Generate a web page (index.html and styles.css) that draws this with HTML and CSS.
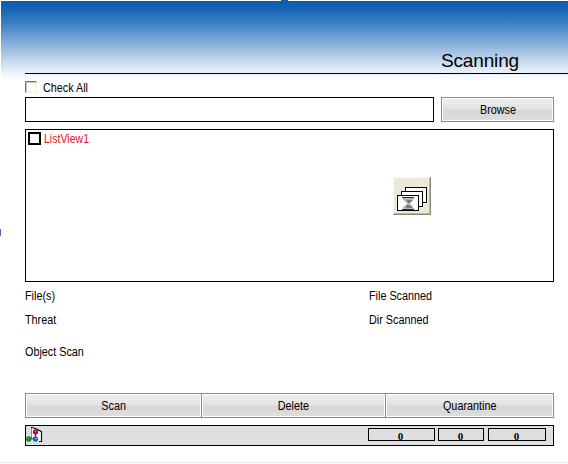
FILE: index.html
```html
<!DOCTYPE html>
<html lang="en">
<head>
<meta charset="utf-8">
<title>Scanning</title>
<link rel="stylesheet" href="styles.css">
</head>
<body>
<main class="form">
  <i class="handle handle-top"></i>
  <i class="handle handle-left"></i>
  <header class="header"><h1>Scanning</h1></header>
  <div class="check-all"><i class="checkbox"></i><span class="text">Check All</span></div>
  <div class="path-row">
    <div class="path"></div>
    <div class="button browse"><span class="text">Browse</span></div>
  </div>
  <section class="list">
    <div class="item"><i class="item-box"></i><span class="text list-name">ListView1</span></div>
    <svg class="component" width="38" height="38" viewBox="0 0 38 38" shape-rendering="crispEdges">
      <path fill="#ece9d8" d="M0 0h38v38H0z"/>
      <path fill="none" stroke="#faf9f3" d="M.5 37V.5H37"/>
      <path fill="none" stroke="#8b897c" d="M0 37.500h37.500V0"/>
      <path fill="none" stroke="#bab7a7" d="M1 36.500h35.500V1"/>
      <g fill="#fff" stroke="#000">
        <path d="M12.500 10.500h21v15h-21z"/>
        <path d="M8.500 14.500h21v15h-21z"/>
        <path d="M4.500 18.500h21v15h-21z"/>
      </g>
      <path fill="#b2b7ba" d="M10 21h11l-1 3-3 2v1l3 2 1 3H10l1-3 3-2v-1l-3-2z"/>
      <path fill="#737c85" d="M14 23h5l-2 3h-2zM14 28h3l2 3h-6z"/>
      <path stroke="#162b70" d="M9 20.500h12"/>
      <path stroke="#173f36" d="M9 32.500h12"/>
    </svg>
  </section>
  <section class="stats">
    <span class="text">File(s)</span><span class="text">File Scanned</span>
    <span class="text">Threat</span><span class="text">Dir Scanned</span>
    <span class="text object">Object Scan</span>
  </section>
  <div class="actions">
    <div class="button"><span class="text">Scan</span></div>
    <div class="button"><span class="text">Delete</span></div>
    <div class="button"><span class="text">Quarantine</span></div>
  </div>
  <footer class="status">
    <svg class="status-icon" width="17" height="17" viewBox="0 0 17 17">
      <path fill="#fff" d="M5 1l5 2 6 3v10l-5-2-6 1z"/>
      <path fill="none" stroke="#88888d" d="M5.500 12V1"/>
      <path fill="none" stroke="#111120" stroke-width="1.200" d="M5 1.200l5 1.500 5.500 3V15.500H13"/>
      <path stroke="#222" d="M3 12.800h7M9.500 7v5"/>
      <circle cx="2.800" cy="13" r="2.700" fill="#168428"/>
      <circle cx="9.500" cy="6" r="2.700" fill="#b20f32"/>
      <circle cx="9.500" cy="13" r="2.700" fill="#1765b0"/>
      <path stroke="#77dc75" d="M2 12.500h1"/>
      <path stroke="#f596a4" d="M9 5.500h1"/>
      <path stroke="#79c9ff" d="M9 12.500h2"/>
    </svg>
    <span class="count files">0</span>
    <span class="count threats">0</span>
    <span class="count folders">0</span>
  </footer>
</main>
</body>
</html>
```
FILE: styles.css
```css
* { box-sizing: border-box; }
body { margin: 0; background: #fff; color: #000; font: 12px/14px "Liberation Sans", Arial, sans-serif; }
.form { position: relative; width: 568px; height: 464px; overflow: hidden; display: flex; flex-direction: column; border-bottom: 1px solid #fffff5; }
.form::after { content: ""; height: 1px; margin-top: 16px; background: #ebebdf; }
.handle { position: absolute; background: #1c5aae; }
.handle-top { left: 281px; top: 0; width: 7px; height: 2px; z-index: 1; }
.handle-left { left: 0; top: 229px; width: 1px; height: 7px; background: #4b65a8; }
.header { height: 80px; flex: none; margin: 1px 0 0 1px; padding-left: 24px; background: linear-gradient(#0b5caf 0, #1465b5 8px, #3a7fc3 22px, #76a5d6 38px, #adc8e5 53px, #dae6f4 66px, #f3f8fe 75px, #fff 80px); }
h1 { height: 73px; margin: 0; border-bottom: 1px solid #000; padding: 49px 0 0 416px; font: 19px/22px "Liberation Sans", Arial, sans-serif; letter-spacing: -.15px; }
.text { display: inline-block; transform: scaleX(.9); transform-origin: left; white-space: nowrap; }
.list-name { transform: scaleX(.88); }
.check-all { height: 16px; margin-left: 25px; display: flex; }
.checkbox { width: 12px; height: 12px; margin-right: 6px; border: 1px solid #eeeede; border-top-color: #77776f; border-left-color: #77776f; box-shadow: inset 1px 1px #c8c8bd; background: #fffffa; }
.path-row { display: flex; height: 25px; margin-left: 25px; gap: 7px; flex: none; }
.path { width: 409px; border: 1px solid #000; }
.button { display: flex; align-items: center; justify-content: center; border: 1px solid #888; box-shadow: inset 0 0 0 1px #fff; background: linear-gradient(#eee, #e3e3e3 45%, #d6d6d6 55%, #dedede); }
.button .text { transform-origin: center; }
.browse { width: 113px; }
.browse .text { margin-left: 1px; }
.list { display: flex; width: 529px; height: 153px; margin: 7px 0 0 25px; border: 1px solid #000; flex: none; }
.item { display: flex; width: 367px; padding: 2px 0 0 2px; color: #df132e; }
.item-box { width: 13px; height: 13px; margin-right: 3px; border: 2px solid #000; }
.component { margin-top: 47px; flex: none; }
.stats { display: grid; grid-template-columns: 344px 1fr; grid-template-rows: 24px 32px 20px; margin: 7px 0 0 25px; height: 104px; flex: none; }
.actions { display: grid; grid-template-columns: 177px 184px 168px; width: 529px; height: 25px; margin-left: 25px; flex: none; }
.actions .button + .button { border-left: 0; }
.status { display: flex; width: 529px; height: 21px; margin: 7px 0 0 25px; border: 1px solid #000; background: #dfdfdf; flex: none; }
.status-icon { width: 17px; height: 17px; margin-right: 325px; }
.count { height: 13px; margin-top: 2px; border: 1px solid #000; text-align: center; font: bold 11px/14px "Liberation Serif", serif; }
.files { width: 67px; padding-right: 2px; margin-right: 3px; }
.threats { width: 46px; padding-right: 1px; margin-right: 4px; }
.folders { width: 58px; padding-right: 1px; }
```
